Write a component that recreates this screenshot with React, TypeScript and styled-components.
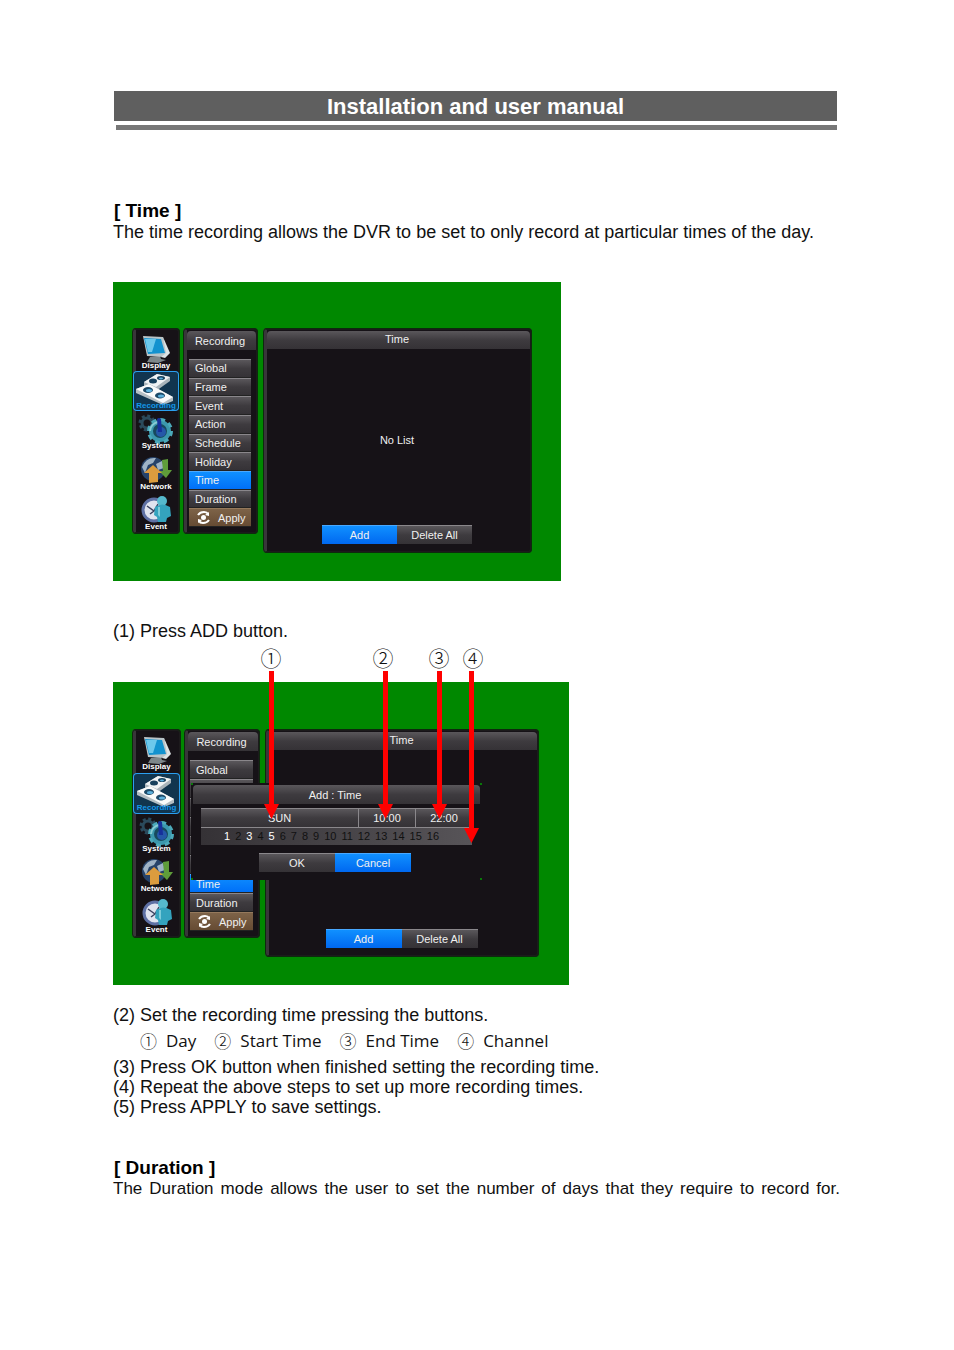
import React from "react";
import styled, { createGlobalStyle, css } from "styled-components";

const sans = `"Liberation Sans", Arial, sans-serif`;
const korean = `"Open Sans", "Noto Sans CJK KR", sans-serif`;
const circled = `"Noto Sans CJK KR", sans-serif`;

const GlobalStyle = createGlobalStyle`
  * { box-sizing: border-box; }
  body { margin: 0; background: #fff; color: #111; font-family: ${sans}; }
  h1, h2, p, ol { margin: 0; padding: 0; }
  button { font: inherit; color: inherit; border: 0; padding: 0; margin: 0; background: none; cursor: pointer; }
`;

const Page = styled.main`
  padding: 91px 114px 150px 113px;
  font-size: 18px;
  line-height: 20px;
`;

const Banner = styled.header`
  margin: 0 3px 70px 1px;
`;

const BannerTitle = styled.h1`
  padding-top: 2px;
  background: #5f5f5f;
  color: #fff;
  font-size: 22px;
  line-height: 28px;
  font-weight: bold;
  text-align: center;
`;

const BannerRule = styled.div`
  height: 5px;
  margin: 4px 0 0 2px;
  background: #777;
`;

const Heading = styled.h2`
  padding-left: 1px;
  font-size: 19px;
  line-height: 22px;
  font-weight: bold;
  color: #000;
`;

const Text = styled.p<{ $justify?: boolean }>`
  ${(p) => p.$justify && css`
    font-size: 17px;
    text-align-last: justify;
  `}
`;

const Section = styled.section<{ $top?: number }>`
  margin-top: ${(p) => p.$top ?? 0}px;
`;

const Legend = styled.p`
  display: flex;
  gap: 18px;
  padding-left: 27px;
  font-family: ${korean};
  font-size: 17px;
  line-height: 32px;
`;

const LegendItem = styled.span`
  display: flex;
  gap: 9px;
`;

const CircleSmall = styled.span`
  width: 17px;
  font-family: ${circled};
  font-weight: 300;
  font-size: 17px;
`;

const Figure = styled.div`
  position: relative;
`;

const Screen = styled.div<{ $large?: boolean }>`
  position: relative;
  display: grid;
  grid-template-columns: ${(p) => (p.$large ? "49px 76px 276px" : "48px 75px 271px")};
  column-gap: 3px;
  align-items: start;
  max-width: ${(p) => (p.$large ? 456 : 448)}px;
  padding: ${(p) => (p.$large ? "47px 0 28px 19px" : "46px 0 28px 19px")};
  background: #008800;
  color: #f0f0f0;
  font-size: 11px;
  line-height: 18px;
`;

const Panel = styled.div<{ $height: number }>`
  height: ${(p) => p.$height}px;
  background: #161217;
  border: 2px solid #1c1a1c;
  border-left: 4px solid #39363a;
  border-radius: 4px;
  outline: 1px solid #0d2a0d;
  outline-offset: -1px;
`;

const Rail = styled(Panel)`
  display: grid;
  grid-template-rows: repeat(5, 1fr);
  padding-top: 1px;
`;

const RailButton = styled.button<{ $active?: boolean }>`
  display: flex;
  flex-direction: column;
  align-items: center;
  margin: 0 -1px 0 -3px;
  border-radius: 4px;
  font-size: 8px;
  line-height: 8px;
  font-weight: bold;
  color: ${(p) => (p.$active ? "#1497e8" : "#fff")};
  ${(p) => p.$active && css`
    background: #11354f;
    box-shadow: inset 0 0 0 1px #2b9ff0;
  `}
  svg { display: block; flex: none; margin: 3px 0 -3px; }
`;

const barFill = css`
  background: linear-gradient(#5a575b, #3e3b3f 50%, #353236);
`;

const PanelTitle = styled.div<{ $line?: number }>`
  ${barFill}
  height: ${(p) => (p.$line === 20 ? 19 : 18)}px;
  line-height: ${(p) => p.$line ?? 18}px;
  padding-right: 3px;
  text-align: center;
  border-radius: 4px 4px 0 0;
`;

const MenuPanel = styled(Panel)`
  padding: 1px 0 0;
`;

const Menu = styled.nav<{ $height: number }>`
  display: grid;
  grid-template-rows: repeat(9, 1fr);
  height: ${(p) => p.$height}px;
  margin: 9px 5px 0 2px;
`;

const MenuButton = styled.button<{ $tone?: "active" | "apply" }>`
  ${barFill}
  display: flex;
  align-items: center;
  gap: 8px;
  padding-left: ${(p) => (p.$tone === "apply" ? 8 : 6)}px;
  line-height: 16px;
  border-top: 1px solid #8a878b;
  border-bottom: 1px solid #222;
  ${(p) => p.$tone === "active" && css`
    background: linear-gradient(#1090ff, #0070f8);
    border-top-color: #49a8ff;
  `}
  ${(p) => p.$tone === "apply" && css`
    background: linear-gradient(#7d6348, #664b33);
    border-top-color: #95795c;
  `}
`;

const Content = styled(Panel)`
  display: flex;
  flex-direction: column;
  margin-left: 2px;
  padding: 1px 0 7px;
`;

const Empty = styled.div`
  flex: 1;
  display: flex;
  align-items: center;
  justify-content: center;
  padding: 5px 3px 0 0;
`;

const ButtonRow = styled.div`
  display: flex;
  justify-content: center;
  padding-right: 3px;
`;

const ActionButton = styled.button<{ $primary?: boolean; $wide?: boolean }>`
  ${barFill}
  width: ${(p) => (p.$wide ? 76 : 75)}px;
  height: 19px;
  line-height: 17px;
  border-top: 1px solid #8a878b;
  ${(p) => p.$primary && css`
    background: linear-gradient(#1090ff, #0068f0);
    border-top-color: #49a8ff;
  `}
`;

const Dialog = styled.div`
  position: absolute;
  left: 78px;
  top: 101px;
  width: 291px;
  height: 97px;
  padding: 2px;
  background:
    linear-gradient(#087808, #087808) 0 0 / 2px 2px no-repeat,
    linear-gradient(#087808, #087808) 100% 0 / 2px 2px no-repeat,
    linear-gradient(#087808, #087808) 0 100% / 2px 2px no-repeat,
    linear-gradient(#087808, #087808) 100% 100% / 2px 2px no-repeat,
    #161217;
`;

const Fields = styled.div`
  display: grid;
  grid-template-columns: 158px 57px 56px;
  margin: 4px 8px 8px;
`;

const Field = styled.button`
  ${barFill}
  height: 19px;
  line-height: 18px;
  border-top: 1px solid #8a878b;
  border-right: 1px solid #8a878b;
  &:last-of-type { border-right: 0; }
`;

const Channels = styled.div`
  grid-column: 1 / -1;
  display: flex;
  gap: 5px;
  height: 18px;
  padding-left: 23px;
  background: linear-gradient(90deg, #353236, #575458);
  border-top: 1px solid #8a878b;
`;

const Channel = styled.button<{ $on: boolean }>`
  line-height: 17px;
  color: ${(p) => (p.$on ? "#fff" : "#111")};
`;

const Callouts = styled.div`
  position: relative;
  height: 41px;
`;

const CalloutNumber = styled.span<{ $x: number }>`
  position: absolute;
  left: ${(p) => p.$x - 15}px;
  top: 0;
  width: 30px;
  text-align: center;
  font-family: ${circled};
  font-weight: 300;
  font-size: 21px;
  line-height: 32px;
`;

const Arrows = styled.svg`
  position: absolute;
  left: 0;
  top: 30px;
  pointer-events: none;
`;

function DisplayIcon() {
  return (
    <svg width="36" height="31" viewBox="0 0 36 31">
      <path d="M12 23 L22 22 L23 25 L28 26 L20 29 L9 28Z" fill="#7d878a" />
      <path d="M5 2 L25 3 L30 19 L26 23 L9 22Z" fill="#b9c4c8" />
      <path d="M6 4 L23 5 L27 19 L10 20Z" fill="#1292cf" />
      <path d="M7 5 L18 5 L14 18 L10 18Z" fill="#6cc8ec" />
      <path d="M25 3 L32 19 L27 24 L23 23 L28 19Z" fill="#dde3e5" />
    </svg>
  );
}

function RecordingIcon() {
  return (
    <svg width="42" height="31" viewBox="0 0 42 31">
      <path d="M9 8 L22 0 L35 3 L35 7 L21 17 L9 13Z" fill="#a9b4ba" />
      <path d="M9 8 L22 0 L35 3 L21 13Z" fill="#f0f3f4" />
      <ellipse cx="18" cy="7" rx="4" ry="2.5" fill="#17405c" />
      <ellipse cx="26" cy="4" rx="4" ry="2" fill="#17405c" />
      <ellipse cx="26" cy="4.5" rx="2" ry="1" fill="#5db0dc" />
      <path d="M1 15 L14 10 L38 23 L38 27 L28 31 L1 19Z" fill="#b4bec3" />
      <path d="M1 15 L14 10 L38 23 L28 29Z" fill="#fafbfb" />
      <ellipse cx="13" cy="16" rx="5" ry="3" fill="#1d4a68" />
      <ellipse cx="25" cy="21.5" rx="5" ry="3" fill="#1d4a68" />
      <ellipse cx="14" cy="16.5" rx="3" ry="1.5" fill="#5db0dc" />
      <ellipse cx="26" cy="22" rx="3" ry="1.5" fill="#5db0dc" />
    </svg>
  );
}

function SystemIcon() {
  return (
    <svg width="36" height="31" viewBox="0 0 36 31">
      <circle cx="9" cy="9" r="5" fill="none" stroke="#2b4a5c" strokeWidth="3" />
      <circle cx="9" cy="9" r="7" fill="none" stroke="#2b4a5c" strokeWidth="3" strokeDasharray="3 2.5" />
      <circle cx="22" cy="17" r="9" fill="#174a5e" stroke="#3b98ad" strokeWidth="4" />
      <circle cx="22" cy="17" r="11.5" fill="none" stroke="#4ba9ba" strokeWidth="3" strokeDasharray="5 4" />
      <path d="M12 17 A10 10 0 0 1 20 8" stroke="#8acbd4" strokeWidth="2" fill="none" />
      <circle cx="23" cy="18" r="5" fill="#2558a8" />
      <path d="M19 5 Q21 3 23 5 L24 18 L20 18Z" fill="#16309a" />
    </svg>
  );
}

function NetworkIcon() {
  return (
    <svg width="36" height="31" viewBox="0 0 36 31">
      <circle cx="15" cy="14" r="12" fill="#27436a" />
      <path d="M4 12 Q8 2 18 3 L15 8 L10 10 L7 18Z M18 9 L24 6 L26 13 L20 15Z" fill="#9fb3c6" />
      <path d="M24 5 L30 4 L30 15 L34 15 L28 23 L21 16 L25 16Z" fill="#5f9d3a" />
      <path d="M15 10 L24 18 L20 18 L20 27 L11 28 L11 18 L6 18Z" fill="#dc9c3e" />
    </svg>
  );
}

function EventIcon() {
  return (
    <svg width="36" height="31" viewBox="0 0 36 31">
      <circle cx="16" cy="15" r="11" fill="#dfe3ef" stroke="#5e70a4" strokeWidth="3" />
      <path d="M9 11 L16 16 L20 9 M16 16 L12 19" stroke="#3b4260" strokeWidth="1.5" fill="none" />
      <circle cx="24" cy="6" r="5" fill="#55b9cd" />
      <path d="M17 12 Q24 7 32 12 L33 21 L29 23 L28 27 L20 27 L19 22 L16 20Z" fill="#34a3be" />
      <path d="M20 12 L22 12 L22 22 L20 20Z" fill="#7ccbd9" />
    </svg>
  );
}

function ApplyIcon() {
  return (
    <svg width="13" height="13" viewBox="0 0 13 13" fill="none" stroke="#fff" strokeWidth="2">
      <path d="M1 4 Q3 1 7 1 Q10 1 11 3 M12 9 Q10 12 6 12 Q3 12 2 10" />
      <path d="M12 1 L12 5 L8 4Z M1 12 L1 8 L5 9Z" fill="#fff" stroke="none" />
      <circle cx="6.5" cy="6.5" r="2.5" fill="#fff" stroke="none" />
    </svg>
  );
}

const railItems = [
  { label: "Display", Icon: DisplayIcon },
  { label: "Recording", Icon: RecordingIcon },
  { label: "System", Icon: SystemIcon },
  { label: "Network", Icon: NetworkIcon },
  { label: "Event", Icon: EventIcon },
];

const menuItems = ["Global", "Frame", "Event", "Action", "Schedule", "Holiday", "Time", "Duration"];

/* Rows that lie behind the open dialog keep their bar but carry no caption. */
const coveredItems = ["Frame", "Event", "Action", "Schedule", "Holiday"];

function RecorderScreen({ large, children }: { large?: boolean; children?: React.ReactNode }) {
  const side = large ? 209 : 206;
  return (
    <Screen $large={large}>
      <Rail $height={side}>
        {railItems.map(({ label, Icon }) => (
          <RailButton key={label} $active={label === "Recording"}>
            <Icon />
            {label}
          </RailButton>
        ))}
      </Rail>
      <MenuPanel $height={side}>
        <PanelTitle $line={20}>Recording</PanelTitle>
        <Menu $height={large ? 171 : 168}>
          {menuItems.map((item) => (
            <MenuButton key={item} aria-label={item} $tone={item === "Time" ? "active" : undefined}>
              {large && coveredItems.includes(item) ? null : item}
            </MenuButton>
          ))}
          <MenuButton $tone="apply">
            <ApplyIcon />
            Apply
          </MenuButton>
        </Menu>
      </MenuPanel>
      <Content $height={large ? 228 : 225}>
        <PanelTitle $line={16}>Time</PanelTitle>
        <Empty>{large ? null : "No List"}</Empty>
        <ButtonRow>
          <ActionButton $primary $wide={large}>Add</ActionButton>
          <ActionButton $wide={large}>Delete All</ActionButton>
        </ButtonRow>
      </Content>
      {children}
    </Screen>
  );
}

const channelOn = [1, 3, 5];

function AddTimeDialog() {
  return (
    <Dialog role="dialog" aria-label="Add time">
      <PanelTitle $line={20}>Add : Time</PanelTitle>
      <Fields>
        <Field>SUN</Field>
        <Field>10:00</Field>
        <Field>22:00</Field>
        <Channels>
          {Array.from({ length: 16 }, (_, i) => i + 1).map((n) => (
            <Channel key={n} $on={channelOn.includes(n)} aria-pressed={channelOn.includes(n)}>
              {n}
            </Channel>
          ))}
        </Channels>
      </Fields>
      <ButtonRow>
        <ActionButton $wide>OK</ActionButton>
        <ActionButton $primary $wide>Cancel</ActionButton>
      </ButtonRow>
    </Dialog>
  );
}

const callouts = [
  { mark: "①", label: "Day", x: 158, arrow: 158, tip: 148 },
  { mark: "②", label: "Start Time", x: 270, arrow: 272, tip: 148 },
  { mark: "③", label: "End Time", x: 326, arrow: 326, tip: 148 },
  { mark: "④", label: "Channel", x: 360, arrow: 358, tip: 172 },
];

export default function App() {
  return (
    <>
      <GlobalStyle />
      <Page>
        <Banner>
          <BannerTitle>Installation and user manual</BannerTitle>
          <BannerRule />
        </Banner>

        <Section>
          <Heading>[ Time ]</Heading>
          <Text>The time recording allows the DVR to be set to only record at particular times of the day.</Text>
        </Section>
        <Section $top={40}>
          <RecorderScreen />
        </Section>

        <Section $top={40}>
          <Text>(1) Press ADD button.</Text>
          <Figure>
            <Callouts>
              {callouts.map((c) => (
                <CalloutNumber key={c.mark} $x={c.x}>{c.mark}</CalloutNumber>
              ))}
            </Callouts>
            <RecorderScreen large>
              <AddTimeDialog />
            </RecorderScreen>
            <Arrows width="456" height="180" viewBox="0 0 456 180" fill="#ff0000">
              {callouts.map((c) => (
                <path
                  key={c.mark}
                  d={`M${c.arrow - 2} 0 h5 v${c.tip - 15} h5 l-7.5 15 l-7.5 -15 h5z`}
                />
              ))}
            </Arrows>
          </Figure>
        </Section>

        <Section $top={20}>
          <Text>(2) Set the recording time pressing the buttons.</Text>
          <Legend>
            {callouts.map((c) => (
              <LegendItem key={c.mark}>
                <CircleSmall>{c.mark}</CircleSmall>
                {c.label}
              </LegendItem>
            ))}
          </Legend>
          <Text>(3) Press OK button when finished setting the recording time.</Text>
          <Text>(4) Repeat the above steps to set up more recording times.</Text>
          <Text>(5) Press APPLY to save settings.</Text>
        </Section>

        <Section $top={40}>
          <Heading>[ Duration ]</Heading>
          <Text $justify>The Duration mode allows the user to set the number of days that they require to record for.</Text>
        </Section>
      </Page>
    </>
  );
}
